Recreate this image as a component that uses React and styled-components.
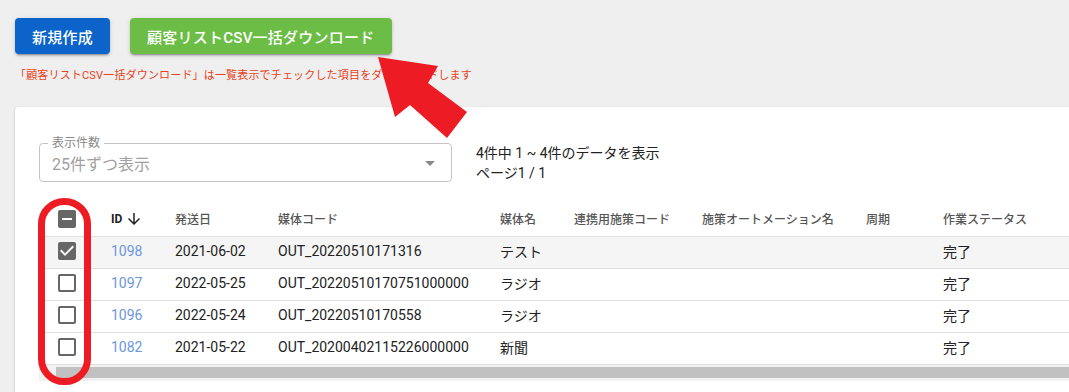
import styled, { createGlobalStyle } from "styled-components";

const GlobalStyle = createGlobalStyle`
  body {
    margin: 0;
    background: #efefef;
    font-family: Roboto, "Noto Sans CJK JP", sans-serif;
    overflow: hidden;
  }
`;

const StPage = styled.div`
  position: relative;
  height: 392px;
  overflow: hidden;
  padding: 18px 0 0 15px;
  box-sizing: border-box;
`;

const StToolbar = styled.div`
  display: flex;
  gap: 20px;
`;

const StButton = styled.button`
  height: 36px;
  padding: 0 17px;
  border: none;
  border-radius: 4px;
  background: ${(p) => p.$bg};
  color: white;
  font-family: Roboto, "Noto Sans CJK JP", sans-serif;
  font-size: 15px;
  font-weight: 500;
  letter-spacing: 0.25px;
  box-shadow: 0 3px 1px -2px rgba(0, 0, 0, 0.2), 0 2px 2px 0 rgba(0, 0, 0, 0.14),
    0 1px 5px 0 rgba(0, 0, 0, 0.12);
  cursor: pointer;
`;

const StNotice = styled.p`
  margin: 14px 0 0;
  font-size: 11px;
  line-height: 16px;
  letter-spacing: 0.17px;
  color: #e8431b;
`;

const StCard = styled.div`
  margin: 23px -40px 0 0;
  padding: 36px 0 0 24px;
  height: 300px;
  background: white;
  border-radius: 4px;
  box-shadow: 0 1px 3px rgba(0, 0, 0, 0.18), 0 1px 1px rgba(0, 0, 0, 0.08);
`;

const StControls = styled.div`
  display: flex;
  align-items: flex-start;
  gap: 24px;
`;

const StSelect = styled.div`
  position: relative;
  box-sizing: border-box;
  width: 413px;
  height: 39px;
  display: flex;
  align-items: center;
  padding: 0 9px 0 12px;
  border: 1px solid #c4c4c4;
  border-radius: 4px;
`;

const StSelectLabel = styled.span`
  position: absolute;
  top: -9px;
  left: 8px;
  padding: 0 4px;
  background: white;
  font-size: 12px;
  line-height: 16px;
  color: #8a8a8a;
`;

const StSelectValue = styled.span`
  flex: 1;
  font-size: 16px;
  color: #a0a0a0;
`;

const StInfo = styled.div`
  font-size: 14px;
  line-height: 20px;
  color: #222;
`;

const StTable = styled.div`
  margin-top: 22px;
  width: 1038px;
`;

const COLUMNS = "56px 64px 103px 222px 74px 128px 164px 77px 150px";

const StRow = styled.div`
  display: grid;
  grid-template-columns: ${COLUMNS};
  box-sizing: border-box;
  height: 32px;
  border-bottom: 1px solid #e0e0e0;
  background: ${(p) => (p.$selected ? "#f5f5f5" : "white")};
`;

const StCell = styled.div`
  display: flex;
  align-items: center;
  padding-left: 16px;
  white-space: nowrap;
  font-size: ${(p) => (p.$head ? "12px" : "14px")};
  font-weight: ${(p) => (p.$head ? 500 : 400)};
  color: ${(p) => (p.$head ? "#555" : "#222")};
`;

const StCheckCell = styled.div`
  display: flex;
  align-items: center;
  justify-content: center;
`;

const StSortLabel = styled.span`
  display: flex;
  align-items: center;
  gap: 3px;
  font-weight: 700;
  color: #222;
`;

const StLink = styled.a`
  color: #6b97dc;
  text-decoration: none;
`;

const StTrack = styled.div`
  width: 1038px;
  height: 16px;
  box-sizing: border-box;
  padding-top: 2px;
  background: #f1f1f1;
`;

const StThumb = styled.div`
  margin-left: 17px;
  height: 11px;
  background: #c1c1c1;
`;

const StHighlight = styled.div`
  position: absolute;
  top: 198px;
  left: 38px;
  width: 53px;
  height: 187px;
  box-sizing: border-box;
  border: 7px solid #ed1c24;
  border-radius: 26px;
  pointer-events: none;
`;

const StArrow = styled.svg`
  position: absolute;
  top: 50px;
  left: 370px;
  pointer-events: none;
`;

const BOX_PATHS = {
  blank:
    "M19 5v14H5V5h14m0-2H5c-1.1 0-2 .9-2 2v14c0 1.1.9 2 2 2h14c1.1 0 2-.9 2-2V5c0-1.1-.9-2-2-2z",
  checked:
    "M19 3H5c-1.11 0-2 .9-2 2v14c0 1.1.89 2 2 2h14c1.11 0 2-.9 2-2V5c0-1.1-.89-2-2-2zm-9 14l-5-5 1.41-1.41L10 14.17l7.59-7.59L19 8l-9 9z",
  indeterminate:
    "M19 3H5c-1.1 0-2 .9-2 2v14c0 1.1.9 2 2 2h14c1.1 0 2-.9 2-2V5c0-1.1-.9-2-2-2zm-2 10H7v-2h10v2z",
};

function CheckIcon({ state }) {
  return (
    <svg width="24" height="24" viewBox="0 0 24 24">
      <path d={BOX_PATHS[state]} fill="#666" />
    </svg>
  );
}

function SortIcon() {
  return (
    <svg width="18" height="18" viewBox="0 0 24 24">
      <path
        d="M20 12l-1.41-1.41L13 16.17V4h-2v12.17l-5.58-5.59L4 12l8 8 8-8z"
        fill="#222"
      />
    </svg>
  );
}

const headers = [
  "発送日",
  "媒体コード",
  "媒体名",
  "連携用施策コード",
  "施策オートメーション名",
  "周期",
  "作業ステータス",
];

const rows = [
  { id: 1098, date: "2021-06-02", code: "OUT_20220510171316", media: "テスト", status: "完了", checked: true },
  { id: 1097, date: "2022-05-25", code: "OUT_20220510170751000000", media: "ラジオ", status: "完了" },
  { id: 1096, date: "2022-05-24", code: "OUT_20220510170558", media: "ラジオ", status: "完了" },
  { id: 1082, date: "2021-05-22", code: "OUT_20200402115226000000", media: "新聞", status: "完了" },
];

export default function App() {
  return (
    <>
      <GlobalStyle />
      <StPage>
        <StToolbar>
          <StButton $bg="#0c63c9">新規作成</StButton>
          <StButton $bg="#6cbd45">顧客リストCSV一括ダウンロード</StButton>
        </StToolbar>
        <StNotice>
          「顧客リストCSV一括ダウンロード」は一覧表示でチェックした項目をダウンロードします
        </StNotice>

        <StCard>
          <StControls>
            <StSelect>
              <StSelectLabel>表示件数</StSelectLabel>
              <StSelectValue>25件ずつ表示</StSelectValue>
              <svg width="24" height="24" viewBox="0 0 24 24">
                <path d="M7 10l5 5 5-5z" fill="#8a8a8a" />
              </svg>
            </StSelect>
            <StInfo>
              4件中 1 ~ 4件のデータを表示
              <br />
              ページ1 / 1
            </StInfo>
          </StControls>

          <StTable>
            <StRow>
              <StCheckCell>
                <CheckIcon state="indeterminate" />
              </StCheckCell>
              <StCell $head>
                <StSortLabel>
                  ID
                  <SortIcon />
                </StSortLabel>
              </StCell>
              {headers.map((h) => (
                <StCell $head key={h}>
                  {h}
                </StCell>
              ))}
              <StCell $head />
            </StRow>
            {rows.map((r) => (
              <StRow key={r.id} $selected={r.checked}>
                <StCheckCell>
                  <CheckIcon state={r.checked ? "checked" : "blank"} />
                </StCheckCell>
                <StCell>
                  <StLink href="#">{r.id}</StLink>
                </StCell>
                <StCell>{r.date}</StCell>
                <StCell>{r.code}</StCell>
                <StCell>{r.media}</StCell>
                <StCell />
                <StCell />
                <StCell />
                <StCell>{r.status}</StCell>
                <StCell />
              </StRow>
            ))}
            <StTrack>
              <StThumb />
            </StTrack>
          </StTable>
        </StCard>

        <StHighlight />
        <StArrow width="110" height="100" viewBox="0 0 110 100">
          <polygon
            points="8,7 68,16 58,33 97,62 77,88 40,55 25,67"
            fill="#ed1c24"
          />
        </StArrow>
      </StPage>
    </>
  );
}
